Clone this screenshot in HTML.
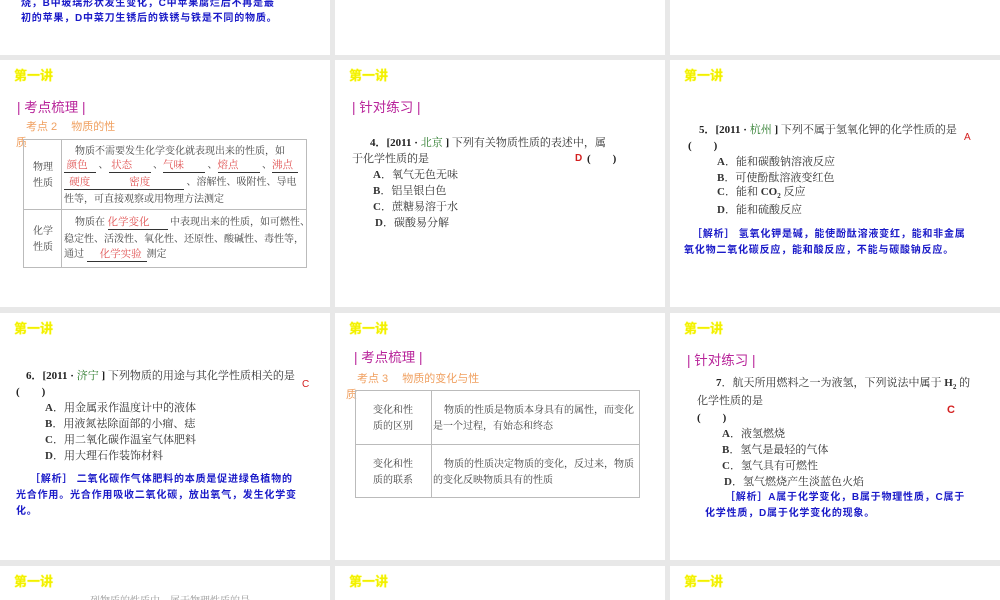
<!DOCTYPE html>
<html style="width:1000px;height:600px;overflow:hidden"><head><meta charset="utf-8"><style>
*{margin:0;padding:0;box-sizing:border-box}
body{width:1000px;height:600px;background:#e8e8e8;position:relative;overflow:hidden;font-family:"Liberation Serif","Noto Serif CJK SC",serif;font-size:11px;color:#333}
.s{position:absolute;background:#fff;width:330px;height:247px;overflow:hidden}
.a{position:absolute;white-space:nowrap;line-height:1}
.h{color:#f2f000;font-family:"Liberation Sans","Noto Sans CJK SC",sans-serif;font-weight:bold;font-size:13px;left:14px;top:9px;text-shadow:0 0 1px #ff0}
.p{color:#b8249a;font-family:"Liberation Sans","Noto Sans CJK SC",sans-serif;font-size:13.5px}
.o{color:#f0a060;font-family:"Liberation Sans","Noto Sans CJK SC",sans-serif;font-size:11px}
.b{color:#1a1ac8;font-family:"Liberation Sans","Noto Sans CJK SC",sans-serif;font-weight:bold;font-size:10px;letter-spacing:0.8px}
.r{color:#d42020;font-family:"Liberation Sans",sans-serif}
.g{color:#2a7a2a}
.k{font-weight:bold;color:#222}
.rt{color:#e05050;font-size:10.5px}
.t{font-size:10px;color:#444}
.u{display:inline-block;border-bottom:1px solid #333}
</style></head><body>

<!-- top partial row -->
<div class="s" style="left:0;top:-192px"></div>
<div class="s" style="left:335px;top:-192px"></div>
<div class="s" style="left:670px;top:-192px"></div>
<div class="a b" style="left:21px;top:-1px">烧，B中玻璃形状发生变化，C中苹果腐烂后不再是最</div>
<div class="a b" style="left:21px;top:14px">初的苹果，D中菜刀生锈后的铁锈与铁是不同的物质。</div>

<!-- row 1 slide 1 -->
<div class="s" style="left:0;top:60px">
<div class="a h">第一讲</div>
<div class="a p" style="left:17px;top:41px">| 考点梳理 |</div>
<div class="a o" style="left:26px;top:62px">考点 2　 物质的性</div>
<div class="a o" style="left:16px;top:78px">质</div>
<div style="position:absolute;left:23px;top:79px;width:284px;height:129px;border:1px solid #bbb"></div>
<div style="position:absolute;left:23px;top:149px;width:284px;height:1px;background:#bbb"></div>
<div style="position:absolute;left:61px;top:79px;width:1px;height:129px;background:#bbb"></div>
<div class="a t" style="left:33px;top:103px">物理</div>
<div class="a t" style="left:33px;top:119px">性质</div>
<div class="a t" style="left:33px;top:167px">化学</div>
<div class="a t" style="left:33px;top:183px">性质</div>
<div class="a t" style="left:75px;top:87px">物质不需要发生化学变化就表现出来的性质，如</div>
<div class="a t" style="left:64px;top:101px"><span class="u" style="width:32px"><span class="rt">&nbsp;颜色</span></span> 、<span class="u" style="width:42px"><span class="rt">&nbsp;状态</span></span> 、<span class="u" style="width:42px"><span class="rt">气味</span></span> 、<span class="u" style="width:42px"><span class="rt">熔点</span></span> 、<span class="u" style="width:26px"><span class="rt">沸点</span></span></div>
<div class="a t" style="left:64px;top:118px"><span class="u" style="width:60px"><span class="rt">&nbsp;&nbsp;硬度</span></span><span class="u" style="width:60px"><span class="rt">&nbsp;&nbsp;密度</span></span> 、溶解性、吸附性、导电</div>
<div class="a t" style="left:64px;top:135px">性等，可直接观察或用物理方法测定</div>
<div class="a t" style="left:75px;top:158px">物质在 <span class="u" style="width:60px"><span class="rt">化学变化</span></span> 中表现出来的性质，如可燃性、</div>
<div class="a t" style="left:64px;top:175px">稳定性、活泼性、氧化性、还原性、酸碱性、毒性等，</div>
<div class="a t" style="left:64px;top:190px">通过 <span class="u" style="width:60px"><span class="rt">&nbsp;&nbsp;&nbsp;&nbsp;&nbsp;化学实验</span></span>测定</div>
</div>

<!-- row1 slide2 -->
<div class="s" style="left:335px;top:60px">
<div class="a h">第一讲</div>
<div class="a p" style="left:17px;top:41px">| 针对练习 |</div>
<div class="a" style="left:35px;top:78px"><span class="k g">4．[2011 · </span><span class="g">北京</span><span class="k g"> ]</span> 下列有关物质性质的表述中，属</div>
<div class="a" style="left:17px;top:94px">于化学性质的是</div>
<div class="a r" style="left:240px;top:94px;font-size:10px;font-weight:bold">D</div>
<div class="a k" style="left:252px;top:94px">(　　)</div>
<div class="a" style="left:38px;top:110px"><b>A</b>．氧气无色无味</div>
<div class="a" style="left:38px;top:126px"><b>B</b>．铝呈银白色</div>
<div class="a" style="left:38px;top:142px"><b>C</b>．蔗糖易溶于水</div>
<div class="a" style="left:40px;top:158px"><b>D</b>．碳酸易分解</div>
</div>

<!-- row1 slide3 -->
<div class="s" style="left:670px;top:60px">
<div class="a h">第一讲</div>
<div class="a" style="left:29px;top:65px"><span class="k g">5．[2011 · </span><span class="g">杭州</span><span class="k g"> ]</span> 下列不属于氢氧化钾的化学性质的是</div>
<div class="a r" style="left:294px;top:73px;font-size:10px">A</div>
<div class="a k" style="left:18px;top:81px">(　　)</div>
<div class="a" style="left:47px;top:97px"><b>A</b>．能和碳酸钠溶液反应</div>
<div class="a" style="left:47px;top:113px"><b>B</b>．可使酚酞溶液变红色</div>
<div class="a" style="left:47px;top:127px"><b>C</b>．能和 <b>CO<sub style="font-size:7px">2</sub></b> 反应</div>
<div class="a" style="left:47px;top:145px"><b>D</b>．能和硫酸反应</div>
<div class="a b" style="left:22px;top:170px">［解析］ 氢氧化钾是碱，能使酚酞溶液变红，能和非金属</div>
<div class="a b" style="left:14px;top:186px">氧化物二氧化碳反应，能和酸反应，不能与碳酸钠反应。</div>
</div>

<!-- row2 slide1 -->
<div class="s" style="left:0;top:313px">
<div class="a h">第一讲</div>
<div class="a" style="left:26px;top:58px"><span class="k g">6．[2011 · </span><span class="g">济宁</span><span class="k g"> ]</span> 下列物质的用途与其化学性质相关的是</div>
<div class="a r" style="left:302px;top:67px;font-size:10px">C</div>
<div class="a k" style="left:16px;top:74px">(　　)</div>
<div class="a" style="left:45px;top:90px"><b>A</b>．用金属汞作温度计中的液体</div>
<div class="a" style="left:45px;top:106px"><b>B</b>．用液氮祛除面部的小瘤、痣</div>
<div class="a" style="left:45px;top:122px"><b>C</b>．用二氧化碳作温室气体肥料</div>
<div class="a" style="left:45px;top:138px"><b>D</b>．用大理石作装饰材料</div>
<div class="a b" style="left:30px;top:162px">［解析］ 二氧化碳作气体肥料的本质是促进绿色植物的</div>
<div class="a b" style="left:16px;top:178px">光合作用。光合作用吸收二氧化碳，放出氧气，发生化学变</div>
<div class="a b" style="left:16px;top:194px">化。</div>
</div>

<!-- row2 slide2 -->
<div class="s" style="left:335px;top:313px">
<div class="a h">第一讲</div>
<div class="a p" style="left:19px;top:38px">| 考点梳理 |</div>
<div class="a o" style="left:22px;top:61px">考点 3　 物质的变化与性</div>
<div class="a o" style="left:11px;top:77px">质</div>
<div style="position:absolute;left:20px;top:77px;width:285px;height:108px;border:1px solid #bbb"></div>
<div style="position:absolute;left:20px;top:131px;width:285px;height:1px;background:#bbb"></div>
<div style="position:absolute;left:96px;top:77px;width:1px;height:108px;background:#bbb"></div>
<div class="a t" style="left:38px;top:93px">变化和性</div>
<div class="a t" style="left:38px;top:109px">质的区别</div>
<div class="a t" style="left:38px;top:147px">变化和性</div>
<div class="a t" style="left:38px;top:163px">质的联系</div>
<div class="a t" style="left:109px;top:93px">物质的性质是物质本身具有的属性，而变化</div>
<div class="a t" style="left:98px;top:109px">是一个过程，有始态和终态</div>
<div class="a t" style="left:109px;top:147px">物质的性质决定物质的变化，反过来，物质</div>
<div class="a t" style="left:98px;top:163px">的变化反映物质具有的性质</div>
</div>

<!-- row2 slide3 -->
<div class="s" style="left:670px;top:313px">
<div class="a h">第一讲</div>
<div class="a p" style="left:17px;top:41px">| 针对练习 |</div>
<div class="a" style="left:46px;top:65px"><span class="k g">7</span>．航天所用燃料之一为液氢，下列说法中属于 <b>H<sub style="font-size:7px">2</sub></b> 的</div>
<div class="a" style="left:27px;top:83px">化学性质的是</div>
<div class="a r" style="left:277px;top:92px;font-size:11px;font-weight:bold">C</div>
<div class="a k" style="left:27px;top:100px">(　　)</div>
<div class="a" style="left:52px;top:116px"><b>A</b>．液氢燃烧</div>
<div class="a" style="left:52px;top:132px"><b>B</b>．氢气是最轻的气体</div>
<div class="a" style="left:52px;top:148px"><b>C</b>．氢气具有可燃性</div>
<div class="a" style="left:54px;top:164px"><b>D</b>．氢气燃烧产生淡蓝色火焰</div>
<div class="a b" style="left:55px;top:180px">［解析］A属于化学变化，B属于物理性质，C属于</div>
<div class="a b" style="left:35px;top:196px">化学性质，D属于化学变化的现象。</div>
</div>

<!-- row3 -->
<div class="s" style="left:0;top:566px;height:34px"><div class="a h">第一讲</div>
<div class="a" style="left:40px;top:31px;color:#999;font-size:10px">　　　　　列物质的性质中，属于物理性质的是　　</div></div>
<div class="s" style="left:335px;top:566px;height:34px"><div class="a h">第一讲</div></div>
<div class="s" style="left:670px;top:566px;height:34px"><div class="a h">第一讲</div></div>
</body></html>
